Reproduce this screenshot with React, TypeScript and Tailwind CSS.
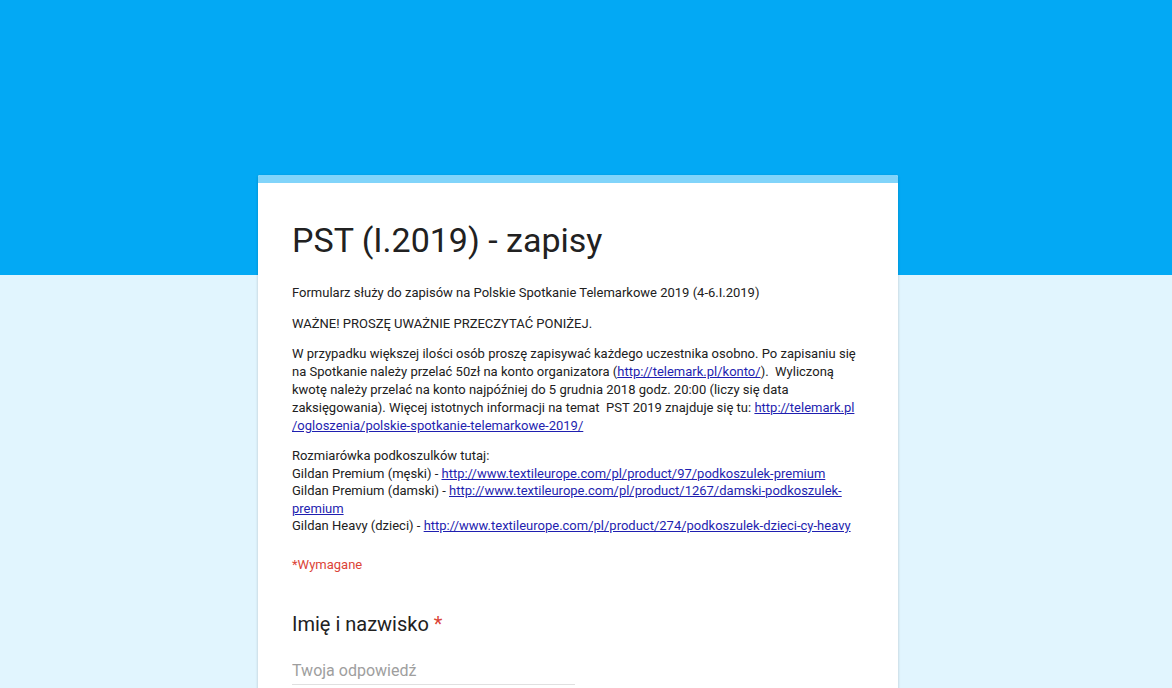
import React from 'react';

const Link: React.FC<{ href: string; children: React.ReactNode }> = ({ href, children }) => (
    <a href={href} className="text-[#1f1fb0] underline">
        {children}
    </a>
);

const App: React.FC = () => {
    return (
        <div className="min-h-[688px] bg-[#e1f5fe] font-['Roboto',sans-serif] text-[#212121]">
            <div className="h-[275px] bg-[#03a9f4]" />
            <div className="-mt-[100px] ml-[258px] w-[640px] overflow-hidden rounded-t-[2px] bg-white shadow-[0_1px_3px_rgba(0,0,0,0.2)]">
                <div className="h-[8px] bg-[#81d4fa]" />
                <div className="px-[34px] pt-[37px]">
                    <h1 className="text-[34px] leading-[40px]">PST (I.2019) - zapisy</h1>

                    <div className="mt-[24px] text-[13px] leading-[18px]">
                        <p>Formularz służy do zapisów na Polskie Spotkanie Telemarkowe 2019 (4-6.I.2019)</p>
                        <p className="mt-[13px]">WAŻNE! PROSZĘ UWAŻNIE PRZECZYTAĆ PONIŻEJ.</p>
                        <p className="mt-[12px] pr-[8px]">
                            W przypadku większej ilości osób proszę zapisywać każdego uczestnika osobno. Po zapisaniu się
                            na Spotkanie należy przelać 50zł na konto organizatora (
                            <Link href="#">http://telemark.pl/konto/</Link>).&nbsp; Wyliczoną kwotę należy przelać na konto
                            najpóźniej do 5 grudnia 2018 godz. 20:00 (liczy się data zaksięgowania). Więcej istotnych
                            informacji na temat&nbsp; PST 2019 znajduje się tu:{' '}
                            <Link href="#">
                                http://telemark.pl
                                <br />
                                /ogloszenia/polskie-spotkanie-telemarkowe-2019/
                            </Link>
                        </p>
                        <p className="mt-[12px] leading-[17.5px]">
                            Rozmiarówka podkoszulków tutaj:
                            <br />
                            Gildan Premium (męski) -{' '}
                            <Link href="#">http://www.textileurope.com/pl/product/97/podkoszulek-premium</Link>
                            <br />
                            Gildan Premium (damski) -{' '}
                            <Link href="#">
                                http://www.textileurope.com/pl/product/1267/damski-podkoszulek-
                                <br />
                                premium
                            </Link>
                            <br />
                            Gildan Heavy (dzieci) -{' '}
                            <Link href="#">http://www.textileurope.com/pl/product/274/podkoszulek-dzieci-cy-heavy</Link>
                        </p>
                        <p className="mt-[21px] text-[#db4437]">*Wymagane</p>
                    </div>

                    <div className="mt-[38px]">
                        <div className="text-[20px] leading-[24px]">
                            Imię i nazwisko <span className="text-[#db4437]">*</span>
                        </div>
                        <div className="mt-[23px] w-[283px] border-b border-[#e0e0e0] pb-[1px]">
                            <input
                                type="text"
                                placeholder="Twoja odpowiedź"
                                className="w-full bg-transparent text-[16px] leading-[20px] outline-none placeholder:text-[#9e9e9e]"
                            />
                        </div>
                        <div className="h-[40px]" />
                    </div>
                </div>
            </div>
        </div>
    );
};

export default App;
